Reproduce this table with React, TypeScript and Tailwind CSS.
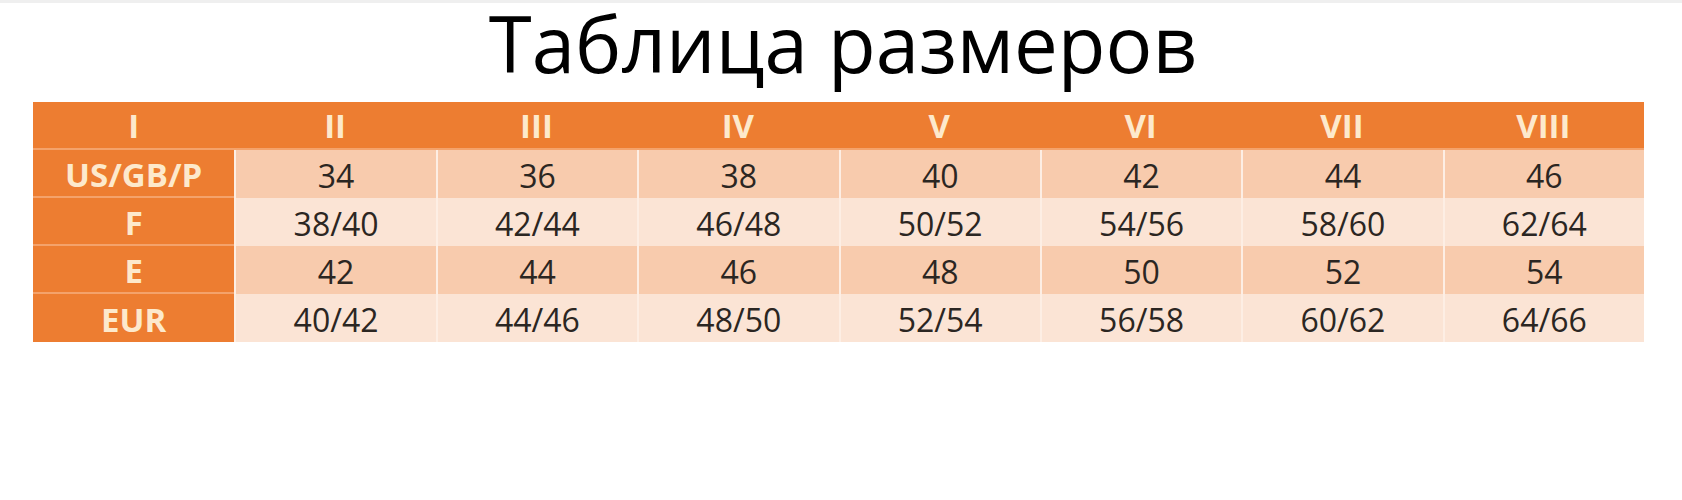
const headers = ["I", "II", "III", "IV", "V", "VI", "VII", "VIII"];

const rows = [
  { label: "US/GB/P", values: ["34", "36", "38", "40", "42", "44", "46"] },
  { label: "F", values: ["38/40", "42/44", "46/48", "50/52", "54/56", "58/60", "62/64"] },
  { label: "E", values: ["42", "44", "46", "48", "50", "52", "54"] },
  { label: "EUR", values: ["40/42", "44/46", "48/50", "52/54", "56/58", "60/62", "64/66"] },
];

export default function App() {
  return (
    <div className="w-[1682px] h-[500px] bg-white border-t-[3px] border-[#efefef] font-['Open_Sans',sans-serif]">
      {/* Title */}
      <div className="h-[99px] pl-[4px] text-center text-[78px] leading-[80px] text-black">
        Таблица размеров
      </div>

      {/* Size table */}
      <div className="ml-[33px] w-[1611px] grid grid-cols-8">
        {headers.map((h) => (
          <div
            key={h}
            className="h-[48px] flex items-center justify-center pt-[2px] bg-[#ed7d31] border-b-2 border-[#f4a26b] text-[33px] font-bold text-[#fde9cc]"
          >
            {h}
          </div>
        ))}

        {rows.map((row, i) => (
          <div key={row.label} className="contents">
            <div
              className={
                "h-[48px] flex items-center justify-center pt-[3px] bg-[#ed7d31] text-[33px] font-bold text-[#fde9cc] " +
                (i < rows.length - 1 ? "border-b-2 border-[#f4a26b]" : "")
              }
            >
              {row.label}
            </div>
            {row.values.map((v, j) => (
              <div
                key={j}
                className={
                  "h-[48px] flex items-center justify-center pt-[4px] border-l-2 border-[#fdeee4] text-[32px] text-[#2b2622] " +
                  (i % 2 === 0 ? "bg-[#f8cbad]" : "bg-[#fbe4d5]")
                }
              >
                {v}
              </div>
            ))}
          </div>
        ))}
      </div>
    </div>
  );
}
